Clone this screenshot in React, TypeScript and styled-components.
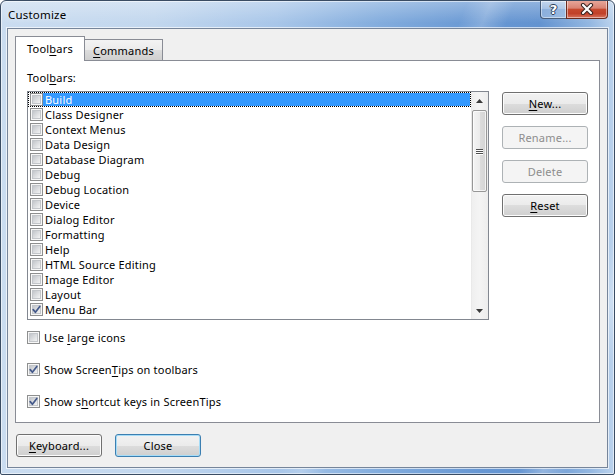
import React from 'react';
import styled, { createGlobalStyle, css } from 'styled-components';

const GlobalStyle = createGlobalStyle`
  html, body { margin: 0; padding: 0; background: #ffffff; }
  body {
    font-family: "Noto Sans", "Open Sans", sans-serif;
    font-size: 11px;
    letter-spacing: 0.2px;
    color: #000;
  }
  * { box-sizing: border-box; }
`;

const Window = styled.div`
  width: 615px;
  height: 475px;
  border: 1px solid #3a4c63;
  border-radius: 6px 6px 2px 2px;
  display: flex;
  flex-direction: column;
  overflow: hidden;
  box-shadow: inset 0 0 0 1px rgba(255, 255, 255, 0.55);
  background:
    linear-gradient(180deg, rgba(255, 255, 255, 0.3) 0px, rgba(255, 255, 255, 0) 22px),
    linear-gradient(112deg, rgba(255, 255, 255, 0) 0%, rgba(255, 255, 255, 0) 58%,
      rgba(255, 255, 255, 0.22) 61%, rgba(255, 255, 255, 0) 64%, rgba(255, 255, 255, 0) 88%,
      rgba(255, 255, 255, 0.3) 91%, rgba(255, 255, 255, 0) 94%),
    linear-gradient(90deg, #cadcf0 0%, #c2d7ee 25%, #a8c6e9 45%, #82acdd 62%, #6797d3 78%,
      #6393d0 88%, #93b7e1 96%, #bcd3ed 100%);
`;

const TitleBar = styled.div`
  height: 27px;
  flex: none;
  display: flex;
  align-items: flex-start;
  padding-left: 7px;
`;

const Title = styled.div`
  margin-top: 6px;
  line-height: 15px;
  font-size: 11.5px;
  color: #000;
  text-shadow: 0 0 6px rgba(255, 255, 255, 0.9);
`;

const CaptionGroup = styled.div`
  margin-left: auto;
  margin-right: 6px;
  margin-top: -1px;
  display: flex;
  height: 19px;
`;

const CaptionButton = styled.div<{ $variant: 'help' | 'close' }>`
  height: 19px;
  display: flex;
  align-items: center;
  justify-content: center;
  border: 1px solid rgba(38, 56, 84, 0.75);
  border-top: none;
  box-shadow: inset 0 0 0 1px rgba(255, 255, 255, 0.45);
  ${(p) =>
    p.$variant === 'help'
      ? css`
          width: 26px;
          border-right: none;
          border-radius: 0 0 0 4px;
          background: linear-gradient(180deg, rgba(255, 255, 255, 0.45) 0%, rgba(255, 255, 255, 0.28) 48%,
            rgba(255, 255, 255, 0.08) 52%, rgba(255, 255, 255, 0.22) 100%);
        `
      : css`
          width: 42px;
          border-radius: 0 0 4px 0;
          border-color: #6b2a1e;
          background: linear-gradient(180deg, #e8aa9e 0%, #d98373 45%, #c6492f 52%, #c1412a 75%, #d7745f 100%);
        `}
`;

const HelpGlyph = styled.span`
  font-family: "DejaVu Sans", sans-serif;
  font-weight: bold;
  font-size: 13px;
  line-height: 13px;
  letter-spacing: 0;
  color: #fff;
  margin-top: 1px;
  text-shadow: -1px 0 #2c3e58, 1px 0 #2c3e58, 0 -1px #2c3e58, 0 1px #2c3e58;
`;

const Client = styled.div`
  flex: 1;
  margin: 0 6px 6px 6px;
  border: 1px solid #76859a;
  box-shadow: 0 0 0 1px rgba(255, 255, 255, 0.65);
  background: #f0f0f0;
  padding: 7px 7px 0 7px;
  display: flex;
  flex-direction: column;
`;

const TabStrip = styled.div`
  height: 24px;
  display: flex;
  align-items: flex-end;
`;

const Tab = styled.div<{ $active?: boolean }>`
  display: flex;
  align-items: center;
  justify-content: center;
  border: 1px solid #898c95;
  border-bottom: none;
  line-height: 15px;
  ${(p) =>
    p.$active
      ? css`
          position: relative;
          z-index: 1;
          width: 70px;
          height: 25px;
          margin-bottom: -1px;
          background: #ffffff;
          padding-bottom: 1px;
        `
      : css`
          width: 78px;
          height: 21px;
          border-left: none;
          background: linear-gradient(180deg, #f3f3f3 0%, #ebebeb 50%, #dddddd 50%, #cfcfcf 100%);
        `}
`;

const Panel = styled.div`
  width: 585px;
  height: 363px;
  border: 1px solid #898c95;
  background: #ffffff;
  padding: 9px 10px 0 11px;
  display: flex;
  flex-direction: column;
`;

const Mn = styled.span`
  text-decoration: underline;
  text-underline-offset: 2px;
`;

const FieldLabel = styled.div`
  line-height: 15px;
  margin-bottom: 6px;
`;

const MainRow = styled.div`
  display: flex;
  align-items: flex-start;
`;

const ListBox = styled.div`
  width: 462px;
  height: 229px;
  border: 1px solid #828790;
  background: #ffffff;
  display: flex;
`;

const Rows = styled.div`
  flex: 1;
  display: flex;
  flex-direction: column;
`;

const Row = styled.div<{ $focused?: boolean }>`
  height: 15px;
  display: flex;
  align-items: center;
  padding-left: 2px;
  ${(p) =>
    p.$focused &&
    css`
      outline: 1px dotted #000;
      outline-offset: -1px;
    `}
`;

const RowLabel = styled.span<{ $selected?: boolean }>`
  align-self: stretch;
  margin: 1px 1px 1px 0;
  padding-left: 2px;
  line-height: 13px;
  flex: 1;
  white-space: nowrap;
  ${(p) =>
    p.$selected &&
    css`
      background: #3399ff;
      color: #ffffff;
    `}
`;

const Box = styled.span`
  position: relative;
  width: 13px;
  height: 13px;
  flex: none;
  border: 1px solid #8e8f8f;
  background: #f7f7f7;
  padding: 1px;
  display: flex;
`;

const BoxFill = styled.span`
  flex: 1;
  border: 1px solid #c3c6ca;
  background: linear-gradient(135deg, #c2c5ca 0%, #d6d8db 40%, #e9eaeb 80%, #f2f2f3 100%);
`;

const CheckSvg = styled.svg`
  position: absolute;
  left: -1px;
  top: -1px;
`;

const Checkbox = ({ checked }: { checked?: boolean }) => (
  <Box>
    <BoxFill />
    {checked && (
      <CheckSvg width="13" height="13" viewBox="0 0 13 13">
        <path d="M3.2 6.6 L5.4 9.3 L9.8 3.4" fill="none" stroke="#44598a" strokeWidth="1.7" strokeLinecap="round" strokeLinejoin="round" />
      </CheckSvg>
    )}
  </Box>
);

const ScrollBar = styled.div`
  width: 17px;
  display: flex;
  flex-direction: column;
  background: linear-gradient(90deg, #e4e4e4 0px, #efefef 1px, #f4f4f4 50%, #ededed 100%);
`;

const ArrowButton = styled.div`
  height: 17px;
  flex: none;
  display: flex;
  align-items: center;
  justify-content: center;
`;

const Thumb = styled.div`
  margin: 1px 1px 0 1px;
  height: 82px;
  border: 1px solid #979797;
  border-radius: 2px;
  background: linear-gradient(90deg, #f4f4f4 0%, #ececec 50%, #dcdcdc 51%, #d4d4d4 100%);
  box-shadow: inset 0 0 0 1px rgba(255, 255, 255, 0.7);
  display: flex;
  flex-direction: column;
  align-items: center;
  justify-content: center;
  gap: 1px;
`;

const GripLine = styled.span`
  width: 7px;
  height: 1px;
  background: #4e4e4e;
  box-shadow: 0 1px 0 #ffffff;
`;

const TrackSpacer = styled.div`
  flex: 1;
`;

const ButtonColumn = styled.div`
  margin-left: 13px;
  padding-top: 1px;
  display: flex;
  flex-direction: column;
  gap: 11px;
`;

const Button = styled.div<{ $disabled?: boolean; $default?: boolean }>`
  width: 86px;
  height: 23px;
  border: 1px solid #707070;
  border-radius: 3px;
  display: flex;
  align-items: center;
  justify-content: center;
  line-height: 15px;
  padding-bottom: 1px;
  background: linear-gradient(180deg, #f2f2f2 0%, #ebebeb 50%, #dddddd 50%, #cfcfcf 100%);
  box-shadow: inset 0 0 0 1px #fcfcfc;
  ${(p) =>
    p.$disabled &&
    css`
      border-color: #adb2b5;
      background: #f4f4f4;
      color: #8d8d8d;
      box-shadow: none;
    `}
  ${(p) =>
    p.$default &&
    css`
      border-color: #3c7fb1;
      box-shadow: inset 0 0 0 1px #a6dcf7;
    `}
`;

const Options = styled.div`
  margin-top: 10px;
  display: flex;
  flex-direction: column;
  gap: 17px;
`;

const OptionRow = styled.div`
  height: 15px;
  display: flex;
  align-items: center;
  gap: 4px;
  line-height: 15px;
`;

const BottomBar = styled.div`
  margin-top: 11px;
  margin-left: 1px;
  display: flex;
  gap: 13px;
`;

const toolbars: { name: string; checked?: boolean }[] = [
  { name: 'Build' },
  { name: 'Class Designer' },
  { name: 'Context Menus' },
  { name: 'Data Design' },
  { name: 'Database Diagram' },
  { name: 'Debug' },
  { name: 'Debug Location' },
  { name: 'Device' },
  { name: 'Dialog Editor' },
  { name: 'Formatting' },
  { name: 'Help' },
  { name: 'HTML Source Editing' },
  { name: 'Image Editor' },
  { name: 'Layout' },
  { name: 'Menu Bar', checked: true },
];

export default function App() {
  return (
    <>
      <GlobalStyle />
      <Window>
        <TitleBar>
          <Title>Customize</Title>
          <CaptionGroup>
            <CaptionButton $variant="help">
              <HelpGlyph>?</HelpGlyph>
            </CaptionButton>
            <CaptionButton $variant="close">
              <svg width="14" height="12" viewBox="0 0 14 12">
                <path d="M3 2 L11 10 M11 2 L3 10" stroke="#3a2320" strokeWidth="4.2" strokeLinecap="round" />
                <path d="M3 2 L11 10 M11 2 L3 10" stroke="#ffffff" strokeWidth="2.2" strokeLinecap="round" />
              </svg>
            </CaptionButton>
          </CaptionGroup>
        </TitleBar>
        <Client>
          <TabStrip>
            <Tab $active>
              <span>
                Tool<Mn>b</Mn>ars
              </span>
            </Tab>
            <Tab>
              <span>
                <Mn>C</Mn>ommands
              </span>
            </Tab>
          </TabStrip>
          <Panel>
            <FieldLabel>
              Tool<Mn>b</Mn>ars:
            </FieldLabel>
            <MainRow>
              <ListBox>
                <Rows>
                  {toolbars.map((t, i) => (
                    <Row key={t.name} $focused={i === 0}>
                      <Checkbox checked={t.checked} />
                      <RowLabel $selected={i === 0}>{t.name}</RowLabel>
                    </Row>
                  ))}
                </Rows>
                <ScrollBar>
                  <ArrowButton>
                    <svg width="7" height="4" viewBox="0 0 7 4">
                      <path d="M0 4 L7 4 L3.5 0 Z" fill="#3a3a3a" />
                    </svg>
                  </ArrowButton>
                  <Thumb>
                    <GripLine />
                    <GripLine />
                    <GripLine />
                  </Thumb>
                  <TrackSpacer />
                  <ArrowButton>
                    <svg width="7" height="4" viewBox="0 0 7 4">
                      <path d="M0 0 L7 0 L3.5 4 Z" fill="#3a3a3a" />
                    </svg>
                  </ArrowButton>
                </ScrollBar>
              </ListBox>
              <ButtonColumn>
                <Button>
                  <span>
                    <Mn>N</Mn>ew...
                  </span>
                </Button>
                <Button $disabled>Rename...</Button>
                <Button $disabled>Delete</Button>
                <Button>
                  <span>
                    <Mn>R</Mn>eset
                  </span>
                </Button>
              </ButtonColumn>
            </MainRow>
            <Options>
              <OptionRow>
                <Checkbox />
                <span>
                  Use <Mn>l</Mn>arge icons
                </span>
              </OptionRow>
              <OptionRow>
                <Checkbox checked />
                <span>
                  Show Screen<Mn>T</Mn>ips on toolbars
                </span>
              </OptionRow>
              <OptionRow>
                <Checkbox checked />
                <span>
                  Show s<Mn>h</Mn>ortcut keys in ScreenTips
                </span>
              </OptionRow>
            </Options>
          </Panel>
          <BottomBar>
            <Button>
              <span>
                <Mn>K</Mn>eyboard...
              </span>
            </Button>
            <Button $default>Close</Button>
          </BottomBar>
        </Client>
      </Window>
    </>
  );
}
